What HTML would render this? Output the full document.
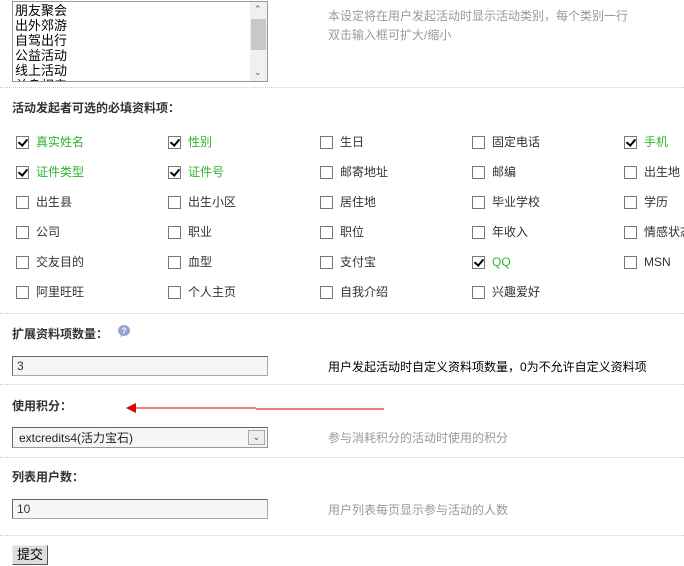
<!DOCTYPE html>
<html><head><meta charset="utf-8"><style>
*{margin:0;padding:0;box-sizing:border-box}
body{width:684px;height:566px;overflow:hidden;background:#fff;font:12px "Liberation Sans","Noto Sans CJK SC",sans-serif;color:#000;position:relative;white-space:nowrap}
.a{position:absolute;white-space:nowrap}
.hr{position:absolute;left:0;width:684px;border-top:1px dotted #ccc;height:0}
.h{font-weight:bold;color:#333}
.g{color:#999}
.cb{position:absolute;width:13px;height:13px;border:1px solid #777;background:#fff}
.cb.c::after{content:"";position:absolute;left:3px;top:0px;width:4px;height:7px;border:solid #000;border-width:0 2px 2px 0;transform:rotate(40deg)}
.lb{position:absolute;color:#333;line-height:14px;white-space:nowrap}
.lb.gr{color:#2db52d}
.inp{position:absolute;left:12px;width:256px;height:20px;border:1px solid #aaa;border-top-color:#666;border-left-color:#666;background:#f6f6f6;padding:2px 4px;line-height:14px;color:#333}
</style></head><body>
<div class="a" style="left:12px;top:1px;width:256px;height:81px;border:1px solid #999;overflow:hidden;line-height:15px;padding:1px 2px;font-size:13px">朋友聚会<br>出外郊游<br>自驾出行<br>公益活动<br>线上活动<br>单身相亲</div>
<div class="a" style="left:250px;top:2px;width:17px;height:79px;background:#f0f0f0"></div>
<div class="a" style="left:251px;top:19px;width:15px;height:31px;background:#c8c8c8"></div>
<div class="a" style="left:254px;top:4px;font-size:9px;color:#555">&#8963;</div>
<div class="a" style="left:254px;top:67px;font-size:9px;color:#555">&#8964;</div>
<div class="a g" style="left:328px;top:7px;line-height:19px">本设定将在用户发起活动时显示活动类别，每个类别一行<br>双击输入框可扩大/缩小</div>
<div class="hr" style="top:87px"></div>
<div class="a h" style="left:12px;top:99px">活动发起者可选的必填资料项：</div>
<div class="cb c" style="left:16px;top:136px"></div><div class="lb gr" style="left:36px;top:135px">真实姓名</div>
<div class="cb c" style="left:168px;top:136px"></div><div class="lb gr" style="left:188px;top:135px">性别</div>
<div class="cb" style="left:320px;top:136px"></div><div class="lb" style="left:340px;top:135px">生日</div>
<div class="cb" style="left:472px;top:136px"></div><div class="lb" style="left:492px;top:135px">固定电话</div>
<div class="cb c" style="left:624px;top:136px"></div><div class="lb gr" style="left:644px;top:135px">手机</div>
<div class="cb c" style="left:16px;top:166px"></div><div class="lb gr" style="left:36px;top:165px">证件类型</div>
<div class="cb c" style="left:168px;top:166px"></div><div class="lb gr" style="left:188px;top:165px">证件号</div>
<div class="cb" style="left:320px;top:166px"></div><div class="lb" style="left:340px;top:165px">邮寄地址</div>
<div class="cb" style="left:472px;top:166px"></div><div class="lb" style="left:492px;top:165px">邮编</div>
<div class="cb" style="left:624px;top:166px"></div><div class="lb" style="left:644px;top:165px">出生地</div>
<div class="cb" style="left:16px;top:196px"></div><div class="lb" style="left:36px;top:195px">出生县</div>
<div class="cb" style="left:168px;top:196px"></div><div class="lb" style="left:188px;top:195px">出生小区</div>
<div class="cb" style="left:320px;top:196px"></div><div class="lb" style="left:340px;top:195px">居住地</div>
<div class="cb" style="left:472px;top:196px"></div><div class="lb" style="left:492px;top:195px">毕业学校</div>
<div class="cb" style="left:624px;top:196px"></div><div class="lb" style="left:644px;top:195px">学历</div>
<div class="cb" style="left:16px;top:226px"></div><div class="lb" style="left:36px;top:225px">公司</div>
<div class="cb" style="left:168px;top:226px"></div><div class="lb" style="left:188px;top:225px">职业</div>
<div class="cb" style="left:320px;top:226px"></div><div class="lb" style="left:340px;top:225px">职位</div>
<div class="cb" style="left:472px;top:226px"></div><div class="lb" style="left:492px;top:225px">年收入</div>
<div class="cb" style="left:624px;top:226px"></div><div class="lb" style="left:644px;top:225px">情感状态</div>
<div class="cb" style="left:16px;top:256px"></div><div class="lb" style="left:36px;top:255px">交友目的</div>
<div class="cb" style="left:168px;top:256px"></div><div class="lb" style="left:188px;top:255px">血型</div>
<div class="cb" style="left:320px;top:256px"></div><div class="lb" style="left:340px;top:255px">支付宝</div>
<div class="cb c" style="left:472px;top:256px"></div><div class="lb gr" style="left:492px;top:255px">QQ</div>
<div class="cb" style="left:624px;top:256px"></div><div class="lb" style="left:644px;top:255px">MSN</div>
<div class="cb" style="left:16px;top:286px"></div><div class="lb" style="left:36px;top:285px">阿里旺旺</div>
<div class="cb" style="left:168px;top:286px"></div><div class="lb" style="left:188px;top:285px">个人主页</div>
<div class="cb" style="left:320px;top:286px"></div><div class="lb" style="left:340px;top:285px">自我介绍</div>
<div class="cb" style="left:472px;top:286px"></div><div class="lb" style="left:492px;top:285px">兴趣爱好</div>
<div class="hr" style="top:313px"></div>
<div class="a h" style="left:12px;top:325px">扩展资料项数量：</div>
<svg class="a" style="left:117px;top:324px" width="14" height="14"><path d="M7 1a6 5.5 0 1 0 0.1 0z M4 11 L3 13 L7 11z" fill="#99a3d6"/><text x="7" y="9.5" font-size="8" fill="#fff" text-anchor="middle" font-family="Liberation Sans" font-weight="bold">?</text></svg>
<div class="inp" style="top:356px">3</div>
<div class="a" style="left:328px;top:358px">用户发起活动时自定义资料项数量，0为不允许自定义资料项</div>
<div class="hr" style="top:384px"></div>
<div class="a h" style="left:12px;top:397px">使用积分：</div>
<svg class="a" style="left:124px;top:402px" width="262" height="12"><line x1="8" y1="6" x2="132" y2="6" stroke="#d00" stroke-width="1"/><line x1="132" y1="7" x2="260" y2="7" stroke="#d00" stroke-width="1"/><path d="M2 6 L12 1 L12 11z" fill="#d00"/></svg>
<div class="a" style="left:12px;top:427px;width:256px;height:21px;border:1px solid #999;border-top-color:#666;border-left-color:#666;background:#f6f6f6;padding:3px 6px;line-height:14px;color:#222">extcredits4(活力宝石)</div>
<div class="a" style="left:248px;top:430px;width:17px;height:15px;border:1px solid #aaa;background:#eee;font-size:9px;text-align:center;line-height:13px;color:#444">&#8964;</div>
<div class="a g" style="left:328px;top:429px">参与消耗积分的活动时使用的积分</div>
<div class="hr" style="top:457px"></div>
<div class="a h" style="left:12px;top:468px">列表用户数：</div>
<div class="inp" style="top:499px">10</div>
<div class="a g" style="left:328px;top:501px">用户列表每页显示参与活动的人数</div>
<div class="hr" style="top:535px"></div>
<div class="a" style="left:12px;top:545px;width:36px;height:20px;border:1px solid;border-color:#eee #555 #555 #eee;background:#ddd;text-align:center;line-height:17px;font-size:13px">提交</div>
</body></html>
